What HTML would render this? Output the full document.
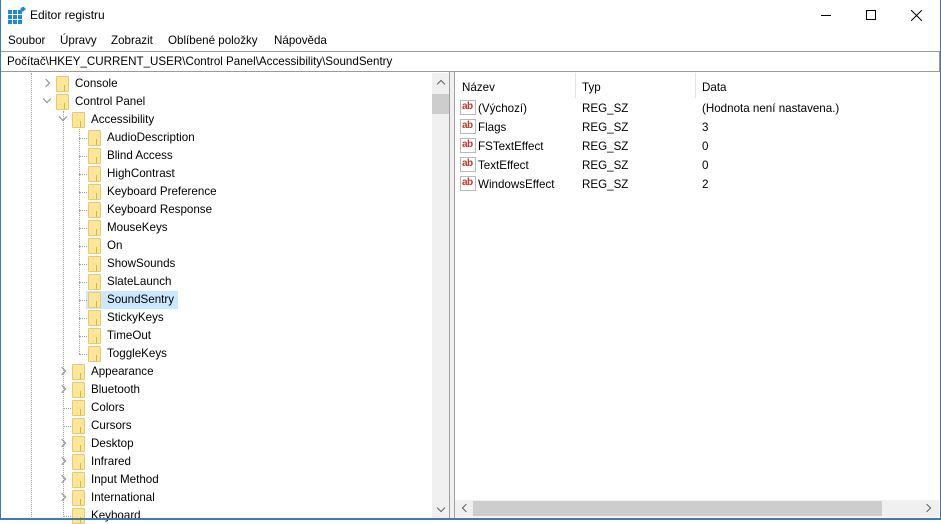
<!DOCTYPE html>
<html><head><meta charset="utf-8"><style>
*{margin:0;padding:0;box-sizing:border-box}
body{width:941px;height:520px;overflow:hidden;background:#fff;font-family:"Liberation Sans",sans-serif;font-size:11.6px;color:#000;position:relative}
.a{position:absolute;white-space:nowrap}
.f{position:absolute;width:13px;height:16px;background:#fde69a;border:1px solid #e8c870;border-radius:1px}
.f:after{content:"";position:absolute;right:0;bottom:0;width:3px;height:6px;border-left:1px solid #d9b24d}
.ch{position:absolute;width:6px;height:6px;border-right:1.5px solid #888;border-bottom:1.5px solid #888}
.r{transform:rotate(-45deg)}.d{transform:rotate(45deg)}
.vl{position:absolute;width:0;border-left:1px dotted #a0a0a0}
.hl{position:absolute;height:0;width:8px;border-top:1px dotted #a0a0a0}
.ab{position:absolute;width:16px;height:15px;border:1px solid #b9b9b9;background:#fff;font-size:10px;font-weight:bold;color:#c0392b;line-height:12px;text-align:left;padding-left:1px;letter-spacing:-0.5px}
</style></head><body>
<div class="a" style="left:0;top:0;width:941px;height:520px;border:1px solid #3c7ab5;border-top:none"></div>
<svg class="a" style="left:8px;top:7px" width="18" height="18"><g fill="#1e8ad6"><rect x="0" y="3" width="4" height="4"/><rect x="5" y="3" width="4" height="4"/><rect x="10" y="3" width="4" height="4"/><rect x="0" y="8" width="4" height="4"/><rect x="5" y="8" width="4" height="4"/><rect x="10" y="8" width="4" height="4"/><rect x="0" y="13" width="4" height="4"/><rect x="5" y="13" width="4" height="4"/><rect x="10" y="13" width="4" height="4"/></g><rect x="13" y="0" width="4" height="4" fill="#1e8ad6" transform="rotate(45 15 2)"/></svg>
<div class="a" style="left:30px;top:8px;font-size:12px">Editor registru</div>
<div class="a" style="left:821px;top:15px;width:10px;height:1px;background:#000"></div>
<div class="a" style="left:866px;top:10px;width:10px;height:10px;border:1px solid #000"></div>
<svg class="a" style="left:911px;top:10px" width="11" height="11"><path d="M0 0L11 11M11 0L0 11" stroke="#000" stroke-width="1"/></svg>
<div class="a" style="left:8px;top:34px">Soubor</div>
<div class="a" style="left:60px;top:34px">Úpravy</div>
<div class="a" style="left:111px;top:34px">Zobrazit</div>
<div class="a" style="left:168px;top:34px">Oblíbené položky</div>
<div class="a" style="left:274px;top:34px">Nápověda</div>
<div class="a" style="left:1px;top:51px;width:939px;height:21px;border:1px solid #9a9a9a;border-left:none"></div>
<div class="a" style="left:7px;top:55px">Počítač\HKEY_CURRENT_USER\Control Panel\Accessibility\SoundSentry</div>
<div class="a" style="left:432px;top:73px;width:17px;height:446px;background:#f0f0f0"></div>
<div class="a" style="left:432px;top:94px;width:17px;height:20px;background:#cdcdcd"></div>
<div class="ch a" style="left:438px;top:81px;transform:rotate(-135deg);border-color:#606060"></div>
<div class="ch d a" style="left:438px;top:505px;border-color:#606060"></div>
<div class="a" style="left:449px;top:72px;width:6px;height:448px;background:#f0f0f0;border-left:1px solid #a0a0a0;border-right:1px solid #a0a0a0"></div>
<div class="vl" style="left:31px;top:73px;height:446px"></div>
<div class="vl" style="left:63px;top:111px;height:408px"></div>
<div class="vl" style="left:79px;top:129px;height:225px"></div>
<div class="a" style="left:86px;top:291px;width:92px;height:18px;background:#cce8ff"></div>
<div id="tree"></div>
<div class="a" style="left:455px;top:72px;width:484px;height:446px;background:#fff"></div>
<div class="a" style="left:462px;top:81px">Název</div>
<div class="a" style="left:575px;top:73px;width:1px;height:25px;background:#e5e5e5"></div>
<div class="a" style="left:582px;top:81px">Typ</div>
<div class="a" style="left:695px;top:73px;width:1px;height:25px;background:#e5e5e5"></div>
<div class="a" style="left:702px;top:81px">Data</div>
<div class="a" style="left:455px;top:500px;width:484px;height:17px;background:#f0f0f0"></div>
<div class="a" style="left:473px;top:501px;width:409px;height:15px;background:#cdcdcd"></div>
<div class="ch a" style="left:463px;top:505px;transform:rotate(135deg);border-color:#606060"></div>
<div class="ch r a" style="left:924px;top:505px;border-color:#606060"></div>
<div class="a" style="left:0;top:518px;width:941px;height:2px;background:#3c7ab5"></div>
<div id="list"></div>
<script>
var rows=[[1,"Console",0],[1,"Control Panel",1],[2,"Accessibility",1],[3,"AudioDescription"],[3,"Blind Access"],[3,"HighContrast"],[3,"Keyboard Preference"],[3,"Keyboard Response"],[3,"MouseKeys"],[3,"On"],[3,"ShowSounds"],[3,"SlateLaunch"],[3,"SoundSentry"],[3,"StickyKeys"],[3,"TimeOut"],[3,"ToggleKeys"],[2,"Appearance",0],[2,"Bluetooth",0],[2,"Colors"],[2,"Cursors"],[2,"Desktop",0],[2,"Infrared",0],[2,"Input Method",0],[2,"International",0],[2,"Keyboard"]];
var h="";
rows.forEach(function(r,i){var y=75+i*18,lv=r[0],fx=56+(lv-1)*16;
if(r[2]===0)h+='<div class="ch r a" style="left:'+(fx-13)+'px;top:'+(y+5)+'px"></div>';
else if(r[2]===1)h+='<div class="ch d a" style="left:'+(fx-12)+'px;top:'+(y+3)+'px"></div>';
else h+='<div class="hl" style="left:'+(fx-9)+'px;top:'+(y+9)+'px"></div>';
h+='<div class="f" style="left:'+fx+'px;top:'+(y+1)+'px"></div><div class="a" style="left:'+(fx+19)+'px;top:'+(y+2)+'px">'+r[1]+'</div>';});
document.getElementById("tree").innerHTML=h;
var L=[["(Výchozí)","(Hodnota není nastavena.)"],["Flags","3"],["FSTextEffect","0"],["TextEffect","0"],["WindowsEffect","2"]];h="";
L.forEach(function(r,i){var y=100+i*19;h+='<div class="ab" style="left:460px;top:'+y+'px">ab</div><div class="a" style="left:478px;top:'+(y+2)+'px">'+r[0]+'</div><div class="a" style="left:582px;top:'+(y+2)+'px">REG_SZ</div><div class="a" style="left:702px;top:'+(y+2)+'px">'+r[1]+'</div>';});
document.getElementById("list").innerHTML=h;
</script>
</body></html>
